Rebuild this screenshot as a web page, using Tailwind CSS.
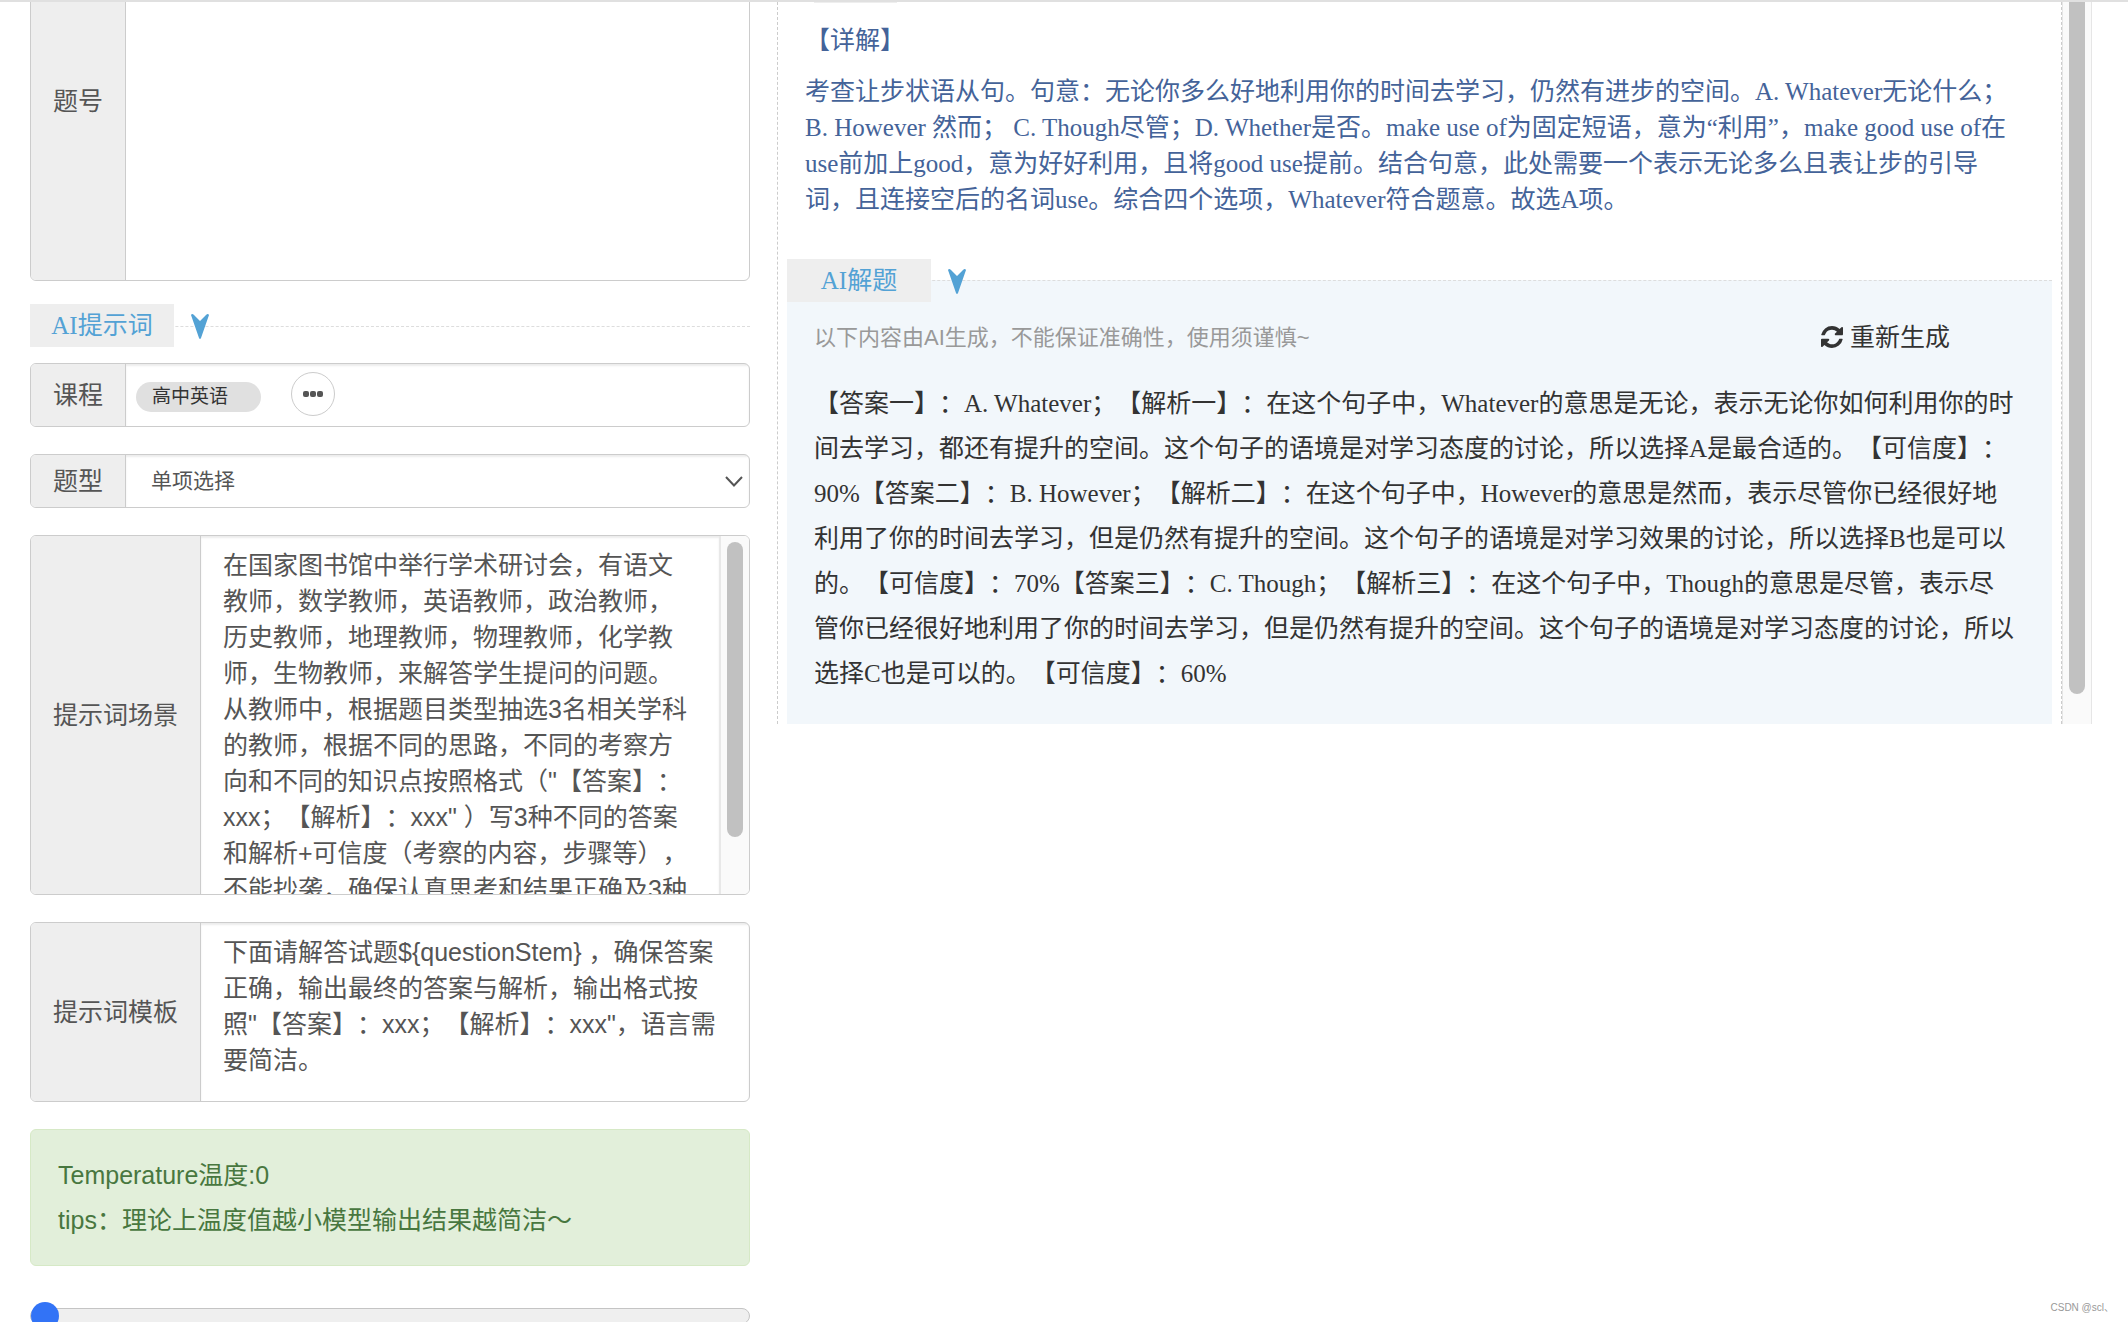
<!DOCTYPE html>
<html lang="zh-CN">
    <head>
        <meta charset="UTF-8">
        <meta name="viewport" content="width=device-width, initial-scale=1.0">
        <title>AI解题</title>
        <script src="https://cdn.jsdelivr.net/npm/@tailwindcss/browser@4"></script>
    </head>
    <body class="h-screen overflow-hidden bg-white text-[25px] text-[#333] font-['Liberation_Sans','Noto_Sans_CJK_SC',sans-serif] [text-spacing-trim:space-all]">
        <main class="relative h-full overflow-hidden border-t-2 border-[#e0e0e0] grid grid-cols-[720fr_1315fr] gap-x-[27px] items-start pl-[30px] pr-[36px]">

            <!-- 左侧表单 -->
            <form class="min-w-0 text-[#555]">
                <div class="flex h-[361px] -mt-[82px] border border-[#ccc] rounded-md overflow-hidden">
                    <label for="number" class="flex items-center px-[22px] pt-[2px] bg-[#eee] border-r border-[#ccc]">题号</label>
                    <textarea id="number" class="flex-1 min-w-0 resize-none outline-none"></textarea>
                </div>

                <div class="mt-[45px] border-t border-dashed border-[#ddd]">
                    <h3 class="flex items-center -mt-[23px] text-[#53a2d5] font-['Liberation_Serif','Noto_Sans_CJK_SC',serif]">
                        <span class="w-[144px] h-[43px] leading-[43px] text-center bg-[#eee]">AI提示词</span>
                        <svg class="ml-[17px] mt-[2px] w-[18px] h-[25px]" viewBox="0 0 18 25" fill="currentColor"><path d="M0 1Q1 -1 3 1L9 7L15 1Q17 -1 18 1L10 24Q9 26 8 24Z"/></svg>
                    </h3>
                </div>

                <div class="flex h-[64px] mt-4 border border-[#ccc] rounded-md overflow-hidden">
                    <span class="flex items-center px-[22px] pt-[2px] bg-[#eee] border-r border-[#ccc]">课程</span>
                    <div class="flex-1 flex items-center pl-[10px] shadow-[inset_0_2px_2px_rgba(0,0,0,0.075)]">
                        <span class="w-[125px] h-[30px] mt-1 pl-4 leading-[30px] rounded-full bg-[#e0e0e0] text-[19px] text-[#333]">高中英语</span>
                        <button type="button" aria-label="更多" class="flex items-center justify-center ml-[30px] mb-[2px] size-[44px] rounded-full border border-[#ccc]">
                            <svg class="w-[20px] h-[6px]" viewBox="0 0 20 6" fill="#555"><rect width="6" height="6" rx="2"/><rect x="7" width="6" height="6" rx="2"/><rect x="14" width="6" height="6" rx="2"/></svg>
                        </button>
                    </div>
                </div>

                <div class="flex h-[54px] mt-[27px] border border-[#ccc] rounded-md overflow-hidden">
                    <label for="type" class="flex items-center px-[22px] pt-[2px] bg-[#eee] border-r border-[#ccc]">题型</label>
                    <div class="relative flex-1">
                        <select id="type" class="appearance-none w-full h-full pl-[25px] text-[21px] outline-none shadow-[inset_0_2px_2px_rgba(0,0,0,0.075)]">
                            <option>单项选择</option>
                        </select>
                        <svg class="absolute right-[6px] top-[21px] w-[18px] h-[11px] pointer-events-none" viewBox="0 0 18 11" fill="none" stroke="#555" stroke-width="2"><path d="M1 1L9 9.500L17 1"/></svg>
                    </div>
                </div>

                <div class="flex h-[360px] mt-[27px] border border-[#ccc] rounded-md overflow-hidden">
                    <label for="scene" class="flex items-center px-[22px] pt-[2px] bg-[#eee] border-r border-[#ccc]">提示词场景</label>
                    <textarea id="scene" class="flex-1 min-w-0 pl-[22px] pt-[11px] leading-[36px] resize-none outline-none overflow-hidden whitespace-pre shadow-[inset_0_2px_2px_rgba(0,0,0,0.075)]">在国家图书馆中举行学术研讨会，有语文
教师，数学教师，英语教师，政治教师，
历史教师，地理教师，物理教师，化学教
师，生物教师，来解答学生提问的问题。
从教师中，根据题目类型抽选3名相关学科
的教师，根据不同的思路，不同的考察方
向和不同的知识点按照格式（"【答案】：
xxx；【解析】：xxx" ）写3种不同的答案
和解析+可信度（考察的内容，步骤等），
不能抄袭，确保认真思考和结果正确及3种</textarea>
                    <div class="w-[30px] pt-[6px] pl-[6px] bg-[#fafafa] border-l-2 border-[#e8e8e8]">
                        <div class="w-4 h-[295px] rounded-full bg-[#c1c1c1]"></div>
                    </div>
                </div>

                <div class="flex h-[180px] mt-[27px] border border-[#ccc] rounded-md overflow-hidden">
                    <label for="template" class="flex items-center px-[22px] pt-[2px] bg-[#eee] border-r border-[#ccc]">提示词模板</label>
                    <textarea id="template" class="flex-1 min-w-0 pl-[22px] pt-[11px] leading-[36px] resize-none outline-none overflow-hidden whitespace-pre shadow-[inset_0_2px_2px_rgba(0,0,0,0.075)]">下面请解答试题${questionStem} ，确保答案
正确，输出最终的答案与解析，输出格式按
照"【答案】：xxx；【解析】：xxx"，语言需
要简洁。</textarea>
                </div>

                <div class="mt-[27px] px-[27px] pt-[23px] pb-[22px] leading-[45px] rounded-md border border-[#d6e9c6] bg-[#e2efda] text-[#48773f]">
                    <p>Temperature温度:0</p>
                    <p>tips：理论上温度值越小模型输出结果越简洁～</p>
                </div>

                <input type="range" min="0" max="1" step="0.1" value="0" aria-label="Temperature温度"
                    class="block appearance-none w-full h-[28px] mt-9 bg-transparent [&::-webkit-slider-runnable-track]:h-4 [&::-webkit-slider-runnable-track]:rounded-full [&::-webkit-slider-runnable-track]:border [&::-webkit-slider-runnable-track]:border-[#c4c4c4] [&::-webkit-slider-runnable-track]:bg-[#efefef] [&::-webkit-slider-thumb]:appearance-none [&::-webkit-slider-thumb]:size-[28px] [&::-webkit-slider-thumb]:-mt-[7px] [&::-webkit-slider-thumb]:rounded-full [&::-webkit-slider-thumb]:bg-[#3273f6]">
            </form>

            <!-- 右侧解析 -->
            <section class="flex min-w-0 h-[722px] border-l border-dashed border-[#ccc]">
                <div class="flex-1 min-w-0 flex flex-col pl-[9px] pr-[9px] border-r border-dashed border-[#ccc] font-['Liberation_Serif','Noto_Sans_CJK_SC',serif]">
                    <div class="ml-[27px] w-[83px] h-px bg-[#eee]"></div>
                    <div class="pl-[18px] leading-[36px] text-[#446399] whitespace-nowrap">
                        <p class="mt-5">【详解】</p>
                        <p class="mt-[15px]">考查让步状语从句。句意：无论你多么好地利用你的时间去学习，仍然有进步的空间。A. Whatever无论什么；<br>
                            B. However 然而； C. Though尽管；D. Whether是否。make use of为固定短语，意为“利用”，make good use of在<br>
                            use前加上good，意为好好利用，且将good use提前。结合句意，此处需要一个表示无论多么且表让步的引导<br>
                            词，且连接空后的名词use。综合四个选项，Whatever符合题意。故选A项。</p>
                    </div>
                    <div class="flex-1 mt-[62px] border-t border-dashed border-[#ddd] bg-[#f2f7fb]">
                        <h3 class="flex items-center -mt-[22px] text-[#53a2d5]">
                            <span class="w-[144px] h-[43px] leading-[43px] text-center bg-[#eee]">AI解题</span>
                            <svg class="ml-[17px] mt-[2px] w-[18px] h-[25px]" viewBox="0 0 18 25" fill="currentColor"><path d="M0 1Q1 -1 3 1L9 7L15 1Q17 -1 18 1L10 24Q9 26 8 24Z"/></svg>
                        </h3>
                        <div class="flex items-center justify-between mt-4 pl-[27px] pr-[102px] font-['Liberation_Sans','Noto_Sans_CJK_SC',sans-serif]">
                            <span class="text-[22px] text-[#999]">以下内容由AI生成，不能保证准确性，使用须谨慎~</span>
                            <button type="button" class="flex items-center gap-[7px] leading-[38px]">
                                <svg class="size-[22px]" viewBox="0 0 1536 1536" fill="currentColor"><path d="M1511 928q0 5-1 7-64 268-268 434.500t-478 166.500q-146 0-282.500-55t-243.500-157l-129 129q-19 19-45 19t-45-19-19-45v-448q0-26 19-45t45-19h448q26 0 45 19t19 45-19 45l-137 137q71 66 161 102t187 36q134 0 250-65t186-179q11-17 53-117 8-23 30-23h192q13 0 22.500 9.500t9.500 22.500zm25-800v448q0 26-19 45t-45 19h-448q-26 0-45-19t-19-45 19-45l138-138q-148-137-349-137-134 0-250 65t-186 179q-11 17-53 117-8 23-30 23h-199q-13 0-22.500-9.500t-9.500-22.500v-7q65-268 270-434.500t480-166.500q146 0 284 55.500t245 156.500l130-129q19-19 45-19t45 19 19 45z"/></svg>
                                重新生成
                            </button>
                        </div>
                        <p class="mt-[25px] pl-[27px] leading-[45px] whitespace-nowrap">【答案一】：A. Whatever；【解析一】：在这个句子中，Whatever的意思是无论，表示无论你如何利用你的时<br>
                            间去学习，都还有提升的空间。这个句子的语境是对学习态度的讨论，所以选择A是最合适的。【可信度】：<br>
                            90%【答案二】：B. However；【解析二】：在这个句子中，However的意思是然而，表示尽管你已经很好地<br>
                            利用了你的时间去学习，但是仍然有提升的空间。这个句子的语境是对学习效果的讨论，所以选择B也是可以<br>
                            的。【可信度】：70%【答案三】：C. Though；【解析三】：在这个句子中，Though的意思是尽管，表示尽<br>
                            管你已经很好地利用了你的时间去学习，但是仍然有提升的空间。这个句子的语境是对学习态度的讨论，所以<br>
                            选择C也是可以的。【可信度】：60%</p>
                    </div>
                </div>
                <div class="w-[30px] pl-[6px] bg-[#fafafa] border-x border-[#e6e6e6]">
                    <div class="w-4 h-[692px] rounded-b-full bg-[#c1c1c1]"></div>
                </div>
            </section>

            <span class="absolute right-[14px] bottom-[7px] text-[10px] text-[#999]">CSDN @scl、</span>
        </main>
    </body>
</html>
